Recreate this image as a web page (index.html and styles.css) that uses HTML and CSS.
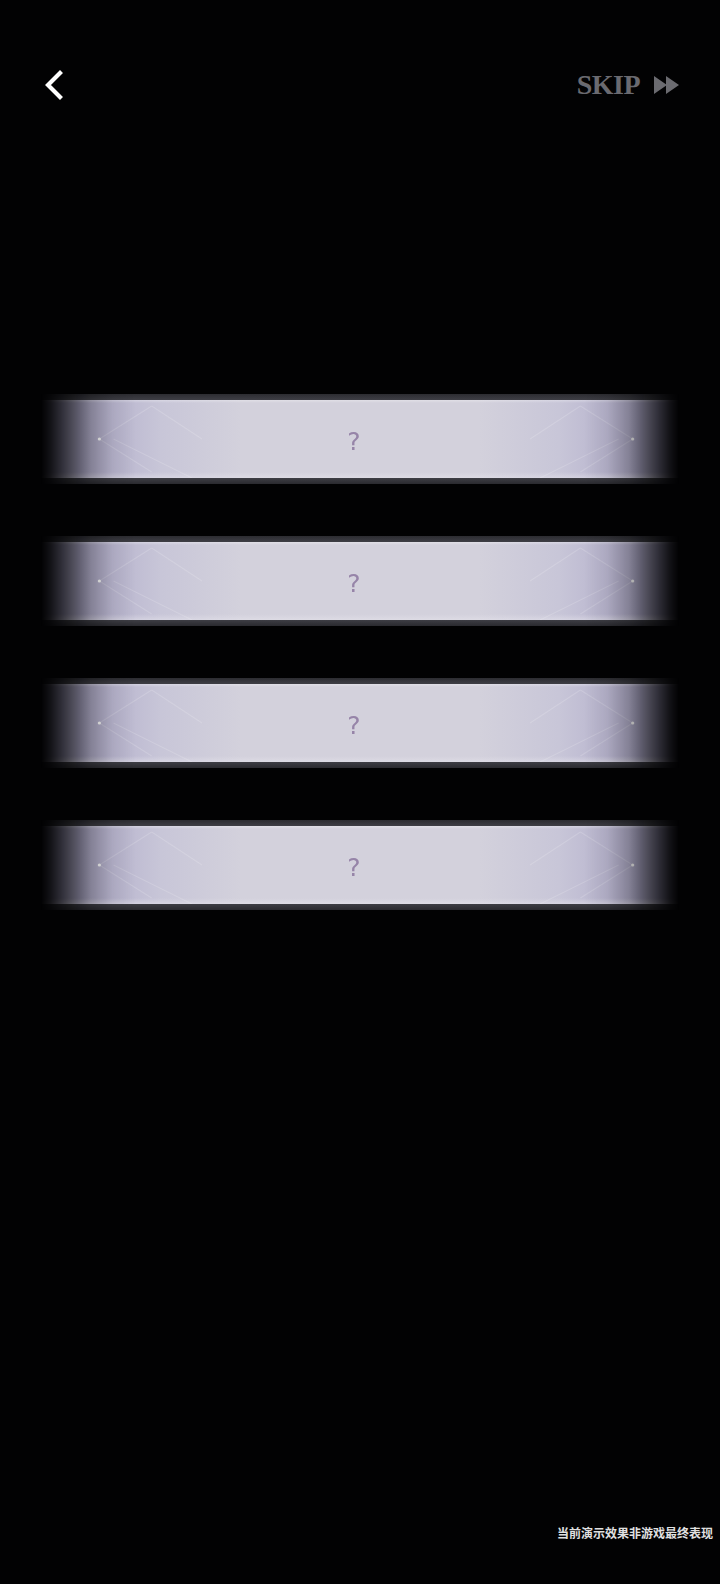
FILE: index.html
```html
<!DOCTYPE html>
<html>
<head>
<meta charset="utf-8">
<link rel="stylesheet" href="styles.css">
</head>
<body>
<div class="screen">
  <header class="topbar">
    <svg class="back" width="24" height="30" viewBox="0 0 24 30"><path d="M18 3 L6 15 L18 27" fill="none" stroke="#fff" stroke-width="4.2" stroke-linecap="square"/></svg>
    <div class="skip">
      <span class="skip-text">SKIP</span>
      <svg width="26" height="18" viewBox="0 0 26 18"><path d="M0 0 L13 9 L0 18 Z M12 0 L25 9 L12 18 Z" fill="#6b6b70"/></svg>
    </div>
  </header>
  <main class="cards">
    <div class="card"><div class="card-body"><svg class="deco" viewBox="0 0 634 78" preserveAspectRatio="none"><g stroke="rgba(255,255,255,0.16)" stroke-width="1" fill="none"><path d="M58 39 L110 6 M58 39 L110 72 M72 39 L150 78 M110 6 L160 39"/><path d="M588 39 L536 6 M588 39 L536 72 M574 39 L496 78 M536 6 L486 39"/></g><circle cx="58" cy="39" r="1.6" fill="#fff"/><circle cx="588" cy="39" r="1.6" fill="#fff"/></svg><span class="q">?</span></div></div>
    <div class="card"><div class="card-body"><svg class="deco" viewBox="0 0 634 78" preserveAspectRatio="none"><g stroke="rgba(255,255,255,0.16)" stroke-width="1" fill="none"><path d="M58 39 L110 6 M58 39 L110 72 M72 39 L150 78 M110 6 L160 39"/><path d="M588 39 L536 6 M588 39 L536 72 M574 39 L496 78 M536 6 L486 39"/></g><circle cx="58" cy="39" r="1.6" fill="#fff"/><circle cx="588" cy="39" r="1.6" fill="#fff"/></svg><span class="q">?</span></div></div>
    <div class="card"><div class="card-body"><svg class="deco" viewBox="0 0 634 78" preserveAspectRatio="none"><g stroke="rgba(255,255,255,0.16)" stroke-width="1" fill="none"><path d="M58 39 L110 6 M58 39 L110 72 M72 39 L150 78 M110 6 L160 39"/><path d="M588 39 L536 6 M588 39 L536 72 M574 39 L496 78 M536 6 L486 39"/></g><circle cx="58" cy="39" r="1.6" fill="#fff"/><circle cx="588" cy="39" r="1.6" fill="#fff"/></svg><span class="q">?</span></div></div>
    <div class="card"><div class="card-body"><svg class="deco" viewBox="0 0 634 78" preserveAspectRatio="none"><g stroke="rgba(255,255,255,0.16)" stroke-width="1" fill="none"><path d="M58 39 L110 6 M58 39 L110 72 M72 39 L150 78 M110 6 L160 39"/><path d="M588 39 L536 6 M588 39 L536 72 M574 39 L496 78 M536 6 L486 39"/></g><circle cx="58" cy="39" r="1.6" fill="#fff"/><circle cx="588" cy="39" r="1.6" fill="#fff"/></svg><span class="q">?</span></div></div>
  </main>
  <footer class="note">当前演示效果非游戏最终表现</footer>
</div>
</body>
</html>
```
FILE: styles.css
```css
html, body {
  margin: 0;
  padding: 0;
  background: #020203;
}
.screen {
  width: 720px;
  height: 1584px;
  display: flex;
  flex-direction: column;
  background: #020203;
  overflow: hidden;
}
.topbar {
  display: flex;
  justify-content: space-between;
  align-items: center;
  padding: 70px 40px 0 42px;
  height: 30px;
}
.back { display: block; }
.skip {
  display: flex;
  align-items: center;
  gap: 14px;
}
.skip-text {
  font-family: "Liberation Serif", "DejaVu Serif", serif;
  font-weight: bold;
  font-size: 28px;
  color: #6a6a70;
  letter-spacing: -0.5px;
  line-height: 30px;
}
.cards {
  display: flex;
  flex-direction: column;
  gap: 52px;
  margin-top: 294px;
  padding: 0 41px;
}
.card {
  height: 90px;
  padding: 6px 0;
  box-sizing: border-box;
  background: linear-gradient(to bottom, #2c2c31 0, #3e3e45 6px, #3e3e45 84px, #2a2a2f 90px);
  -webkit-mask-image: linear-gradient(to right, transparent 0, rgba(0,0,0,0.12) 10px, rgba(0,0,0,0.4) 28px, rgba(0,0,0,0.75) 50px, rgba(0,0,0,0.93) 72px, #000 95px, #000 calc(100% - 95px), rgba(0,0,0,0.93) calc(100% - 72px), rgba(0,0,0,0.75) calc(100% - 50px), rgba(0,0,0,0.4) calc(100% - 28px), rgba(0,0,0,0.12) calc(100% - 10px), transparent 100%);
  mask-image: linear-gradient(to right, transparent 0, rgba(0,0,0,0.12) 10px, rgba(0,0,0,0.4) 28px, rgba(0,0,0,0.75) 50px, rgba(0,0,0,0.93) 72px, #000 95px, #000 calc(100% - 95px), rgba(0,0,0,0.93) calc(100% - 72px), rgba(0,0,0,0.75) calc(100% - 50px), rgba(0,0,0,0.4) calc(100% - 28px), rgba(0,0,0,0.12) calc(100% - 10px), transparent 100%);
}
.card-body {
  position: relative;
  height: 78px;
  display: flex;
  align-items: center;
  justify-content: center;
  background:
    linear-gradient(to bottom, rgba(255,255,255,0.3) 0, rgba(255,255,255,0) 3px, rgba(255,255,255,0) 72px, rgba(230,228,236,0.5) 78px),
    linear-gradient(to right, #9a96b6 0, #b5b1cc 60px, #c8c6d8 120px, #d3d1dc 200px, #d3d1dc calc(100% - 200px), #c8c6d8 calc(100% - 120px), #b5b1cc calc(100% - 60px), #9a96b6 100%);
}
.deco {
  position: absolute;
  left: 0;
  top: 0;
  width: 100%;
  height: 100%;
}
.q {
  position: relative;
  font-family: "DejaVu Sans", "Noto Sans", sans-serif;
  font-size: 25px;
  color: #9684a8;
  margin-left: -12px;
  margin-top: 4px;
}
.note {
  margin-top: auto;
  margin-bottom: 44px;
  align-self: flex-end;
  padding-right: 7px;
  font-family: "Noto Sans CJK SC", sans-serif;
  font-weight: bold;
  font-size: 12px;
  color: #e0e0e0;
  line-height: 14px;
}
```
